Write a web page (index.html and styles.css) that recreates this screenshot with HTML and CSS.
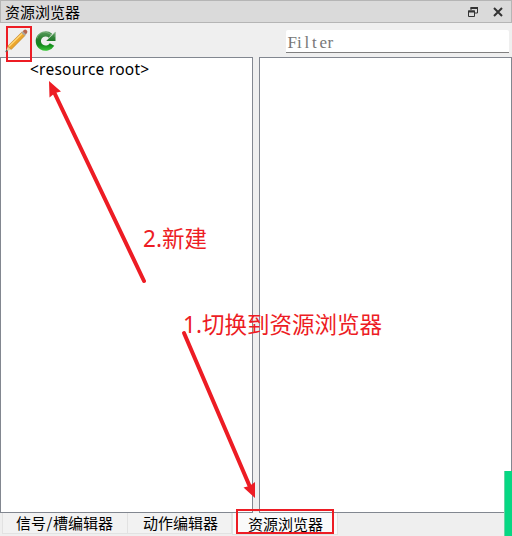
FILE: index.html
```html
<!DOCTYPE html>
<html lang="zh-CN">
<head>
<meta charset="utf-8">
<title>资源浏览器</title>
<link rel="stylesheet" href="styles.css">
</head>
<body>
<div class="dock">
  <header class="titlebar">
    <span class="title">资源浏览器</span>
    <svg class="float-icon" width="12" height="12" viewBox="0 0 12 12"><path d="M4 4V1.500h6.500V7H8" fill="none" stroke="#333"/><path d="M3.500 2h7.500" stroke="#333" stroke-width="2"/><path d="M1.500 5h6v5.500h-6z" fill="#dadada" stroke="#333"/><path d="M1 5.500h7" stroke="#333" stroke-width="2"/></svg>
    <svg class="close-icon" width="10" height="10" viewBox="0 0 10 10"><path d="M1 1l8 8M9 1L1 9" stroke="#333" stroke-width="2"/></svg>
  </header>
  <div class="toolbar">
    <div class="tool marked">
      <svg width="22" height="32" viewBox="0 0 22 32">
        <g transform="translate(-1.300 .7)">
        <path d="M-1 23L1.300 17.500L4.300 20.500Z" fill="#e9cf9c"/>
        <path d="M-1.500 23.500L-.3 20.800L1.200 22.200Z" fill="#555"/>
        <path d="M1 17.500L15 3.500L18.400 6.700L4.600 20.700Z" fill="#eba52c" stroke="#b98028" stroke-width=".6"/>
        <path d="M2.200 17.800L15.800 4.500" stroke="#ffd778" stroke-width="1.400"/>
        <path d="M14.600 4L16.400 2.200L19.700 5.200L17.900 7.100Z" fill="#aaa69d"/>
        <path d="M16 2.600L17.300 1.300Q18.500.3 20 1.600Q21.300 3 20.300 4.300L19.200 5.600Z" fill="#b8654a"/>
        </g>
      </svg>
    </div>
    <svg class="reload" width="22" height="22" viewBox="0 0 22 22">
      <defs><linearGradient id="leaf" gradientUnits="userSpaceOnUse" x1="0" y1="1" x2="0" y2="21"><stop offset="0" stop-color="#5c9d5f"/><stop offset=".45" stop-color="#237b2c"/><stop offset=".7" stop-color="#138a1b"/><stop offset="1" stop-color="#3dcc3b"/></linearGradient></defs>
      <path d="M17 14.500A7.300 7.100 0 1 1 15.500 5.800" fill="none" stroke="url(#leaf)" stroke-width="5.200"/>
      <path d="M20.500 1.800V11H11.200Z" fill="url(#leaf)"/>
      <path d="M2 8.500C3.500 2 10.500-.5 16.800 5.500L20 2.800V7" fill="none" stroke="#a8cda6" stroke-width=".8" opacity=".55"/>
    </svg>
    <div class="filter"><svg width="60" height="22"><text class="filter-text" x="1.500 11 18.500 26 33.500 41.500" y="17.500">Filter</text></svg></div>
  </div>
  <main class="panes">
    <section class="pane"><div class="root">&lt;resource root&gt;</div></section>
    <section class="pane"></section>
  </main>
  <nav class="tabs">
    <div class="tab first">信号<span class="slash">/</span>槽编辑器</div>
    <div class="tab second">动作编辑器</div>
    <div class="tab active">资源浏览器</div>
  </nav>
</div>
<div class="scroll-mark"></div>
<div class="tab-mark"></div>
<svg class="notes" width="512" height="536" viewBox="0 0 512 536">
  <g stroke="#ed1c24" stroke-width="4" stroke-linecap="round"><path d="M144 281L54 92"/><path d="M184 333L250 487"/></g>
  <path d="M49 81L61 91.500L55 93L49.500 97.500ZM255 498L243.500 487.500L249.500 486L255 482Z" fill="#ed1c24"/>
  <text x="143" y="247" textLength="64" lengthAdjust="spacingAndGlyphs">2.新建</text>
  <text x="183" y="333" textLength="199" lengthAdjust="spacingAndGlyphs">1.切换到资源浏览器</text>
</svg>
</body>
</html>
```
FILE: styles.css
```css
* { box-sizing: border-box; }
body {
  margin: 0;
  width: 512px;
  height: 536px;
  overflow: hidden;
  position: relative;
  background: #efefef;
  color: #000;
  font-family: "Noto Sans", "Noto Sans CJK SC", sans-serif;
}
svg { display: block; flex: none; }
.dock { height: 536px; display: flex; flex-direction: column; }
.titlebar {
  height: 23px;
  flex: none;
  display: flex;
  align-items: center;
  padding: 0 8px 0 4px;
  background: #dadada;
  border: 1px solid #b5b5b5;
}
.title { flex: 1; font: 15px/21px "Noto Sans CJK SC", sans-serif; }
.float-icon { margin-right: 14px; }
.close-icon { margin-top: 1px; }
.toolbar { height: 34px; flex: none; display: flex; align-items: flex-start; padding: 3px 3px 0 6px; }
.tool { width: 26px; height: 36px; flex: none; }
.marked { border: 2px solid #ed1c24; position: relative; z-index: 1; }
.marked svg { overflow: visible; }
.reload { margin: 4px 0 0 3px; }
.filter {
  width: 223px;
  height: 23px;
  margin: 4px 0 0 auto;
  background: #fff;
  border-bottom: 1px solid #808080;
  border-radius: 2px 2px 0 0;
}
.filter-text { font: 17px "Liberation Serif", serif; fill: #777; }
.panes { height: 456px; flex: none; display: flex; gap: 6px; }
.pane { flex: 1; background: #fff; border: 1px solid #828790; }
.root { padding: 0 0 0 29px; font: 15.5px/23px "Noto Sans", sans-serif; letter-spacing: .25px; white-space: nowrap; }
.tabs { height: 23px; display: flex; align-items: flex-start; padding-left: 2px; }
.tab {
  height: 21px;
  padding-left: 13px;
  font: 15px/20px "Noto Sans CJK SC", sans-serif;
  white-space: nowrap;
  background: #f2f2f2;
  border: 1px solid #e2e2e2;
  border-top: 0;
}
.slash { display: inline-block; width: 7px; text-align: center; }
.first { width: 126px; }
.second { width: 104px; padding-left: 15px; border-left: 0; }
.active { width: 106px; height: 22px; padding-left: 15px; line-height: 22px; background: #fafafa; }
.tab-mark { position: absolute; left: 236px; top: 509px; width: 98px; height: 25px; border: 2px solid #ed1c24; }
.scroll-mark { position: absolute; right: 0; bottom: 0; width: 8px; height: 65px; background: #06d783; border-left: 1px solid #66d5a4; }
.notes { position: absolute; left: 0; top: 0; }
.notes text { font: 400 23px "Noto Sans", "Noto Sans CJK SC", sans-serif; fill: #ed1c24; }
```
